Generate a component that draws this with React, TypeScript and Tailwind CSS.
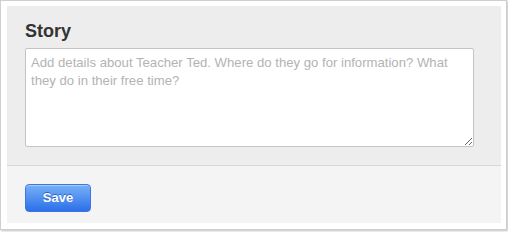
import React from 'react';

export default function App() {
  return (
    <div className="w-[508px] h-[232px] bg-white" style={{ fontFamily: '"Liberation Sans", Arial, sans-serif' }}>
      <div className="w-[507px] h-[230px] border border-[#cfcfcf] bg-white pl-[6px] pr-[5px] pt-[5px] pb-[6px] shadow-[1px_1px_2px_rgba(0,0,0,0.25)]">
        <div className="flex flex-col h-full">
          <div className="bg-[#ededed] pl-[18px] pr-[27px] pt-[15px] pb-[18px] border-b border-[#d9d9d9]">
            <h2 className="text-[18px] leading-[20px] font-bold text-[#333] mb-[7px]">Story</h2>
            <textarea
              className="block w-full h-[99px] bg-white border border-[#c4c4c4] rounded-[2px] px-[5px] pt-[5px] text-[13.15px] leading-[18px] text-[#333] placeholder:text-[#b3b3b3] outline-none"
              placeholder="Add details about Teacher Ted. Where do they go for information? What they do in their free time?"
            />
          </div>
          <div className="flex-1 bg-[#f4f4f4] pl-[18px] pt-[18px]">
            <button className="w-[66px] h-[28px] rounded-[4px] border border-[#3a78de] bg-gradient-to-b from-[#77b0f7] to-[#2c6fe9] text-white text-[13px] font-bold [text-shadow:0_-1px_0_rgba(0,40,140,0.5)] shadow-[inset_0_1px_0_rgba(255,255,255,0.35)]">
              Save
            </button>
          </div>
        </div>
      </div>
    </div>
  );
}
